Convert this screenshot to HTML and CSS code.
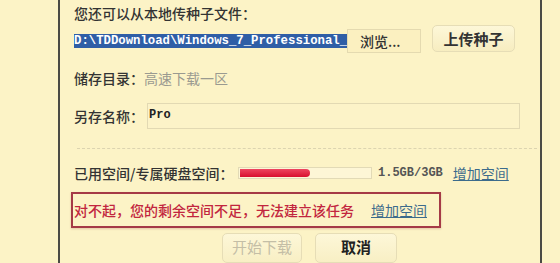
FILE: index.html
```html
<!DOCTYPE html>
<html>
<head>
<meta charset="utf-8">
<link rel="stylesheet" href="styles.css">
</head>
<body>
<div class="dialog">
  <div class="row r1">您还可以从本地传种子文件：</div>
  <div class="row r2">
    <div class="path"><span class="sel">D:\TDDownload\Windows_7_Professional_</span></div>
    <div class="browse">浏览...</div>
    <div class="upload">上传种子</div>
  </div>
  <div class="row r3"><span class="lbl">储存目录：</span><span class="muted">高速下载一区</span></div>
  <div class="row r4"><span class="lbl name">另存名称：</span><div class="input">Pro</div></div>
  <div class="dash"></div>
  <div class="row r5">
    <span class="lbl space">已用空间/专属硬盘空间：</span>
    <div class="bar"><div class="fill" style="width:70px"></div></div>
    <span class="size">1.5GB/3GB</span>
    <a class="link">增加空间</a>
  </div>
  <div class="alert"><span class="err">对不起，您的剩余空间不足，无法建立该任务</span><a class="link">增加空间</a></div>
  <div class="row btns">
    <div class="btn disabled">开始下载</div>
    <div class="btn">取消</div>
  </div>
</div>
</body>
</html>
```
FILE: styles.css
```css
html, body { margin: 0; padding: 0; }
body {
  background: #fcf3c6;
  font-family: "Noto Sans CJK SC", "Noto Sans", sans-serif;
  font-size: 14px;
  font-weight: 500;
  color: #333;
  width: 560px;
  height: 263px;
  overflow: hidden;
}
.dialog {
  margin-left: 58px;
  width: 466px;
  height: 263px;
  border-left: 2px solid #4a4a44;
  border-right: 2px solid #4a4a44;
  padding-left: 14px;
  box-sizing: content-box;
  display: flex;
  flex-direction: column;
}
.row { display: flex; align-items: center; line-height: 20px; white-space: nowrap; }
.r1 { margin-top: 3px; height: 20px; }
.r2 { margin-top: 0; height: 30px; align-items: flex-start; }
.path { margin-top: 5px; height: 14px; width: 268px; }
.sel {
  display: inline-block;
  background: #2f5ea6;
  color: #fff;
  font-family: "Liberation Mono", monospace;
  font-weight: bold;
  font-size: 12.3px;
  line-height: 14px;
  height: 14px;
}
.browse {
  margin-top: 6px;
  margin-left: 5px;
  height: 22px;
  border: 1px solid #e4dab0;
  background: #fbf0c0;
  line-height: 22px;
  padding-left: 12px;
  width: 60px;
  color: #333;
}
.upload {
  margin-top: 2px;
  margin-left: 11px;
  width: 81px;
  height: 25px;
  border: 1px solid #e6ddb6;
  border-radius: 5px;
  background: linear-gradient(#fdf7d8, #f7edc0);
  text-align: center;
  line-height: 25px;
  font-size: 15px;
  font-weight: bold;
  color: #333;
}
.r3 { margin-top: 15px; height: 20px; }
.muted { color: #9a9a90; font-weight: 400; }
.r4 { margin-top: 15px; height: 26px; }
.name { width: 73px; }
.input {
  width: 370px;
  height: 24px;
  border: 1px solid #e2d9b3;
  background: #fcf3c8;
  font-family: "Liberation Mono", monospace;
  font-weight: bold;
  font-size: 12px;
  line-height: 22px;
  padding-left: 1px;
  color: #222;
}
.dash {
  margin-top: 19px;
  margin-left: 3px;
  width: 460px;
  border-top: 1px dashed #dcd4b0;
}
.r5 { margin-top: 14px; height: 20px; }
.space { width: 164px; }
.bar {
  width: 132px;
  height: 10px;
  border: 1px solid #e2dab6;
  background: #fdf6d6;
  display: flex;
  align-items: center;
}
.fill {
  height: 8px;
  margin-left: 1px;
  background: linear-gradient(#ee4660, #d8102e);
  border-radius: 0 5px 5px 0;
}
.size {
  margin-left: 6px;
  font-family: "Liberation Mono", monospace;
  font-weight: bold;
  font-size: 12px;
  color: #555;
}
.link {
  color: #3c6b8c;
  font-weight: 400;
  text-decoration: underline;
  margin-left: 10px;
}
.alert {
  margin-top: 9px;
  margin-left: -3px;
  width: 365px;
  height: 37px;
  border: 2px solid #a53a46;
  display: flex;
  align-items: center;
  padding-left: 1px;
  white-space: nowrap;
  box-shadow: 0 1px 2px rgba(160, 60, 60, 0.25);
}
.err { color: #c2263e; }
.alert .link { margin-left: 17px; }
.btns { margin-top: 5px; margin-left: 148px; align-items: flex-start; }
.btn {
  height: 28px;
  width: 80px;
  border: 1px solid #e6ddb6;
  border-radius: 5px;
  background: linear-gradient(#fdf7d8, #f8efc4);
  text-align: center;
  line-height: 26px;
  font-size: 15px;
  font-weight: bold;
  color: #222;
  margin-right: 13px;
}
.btn.disabled { color: #c4bea6; width: 78px; font-weight: 400; }
```
